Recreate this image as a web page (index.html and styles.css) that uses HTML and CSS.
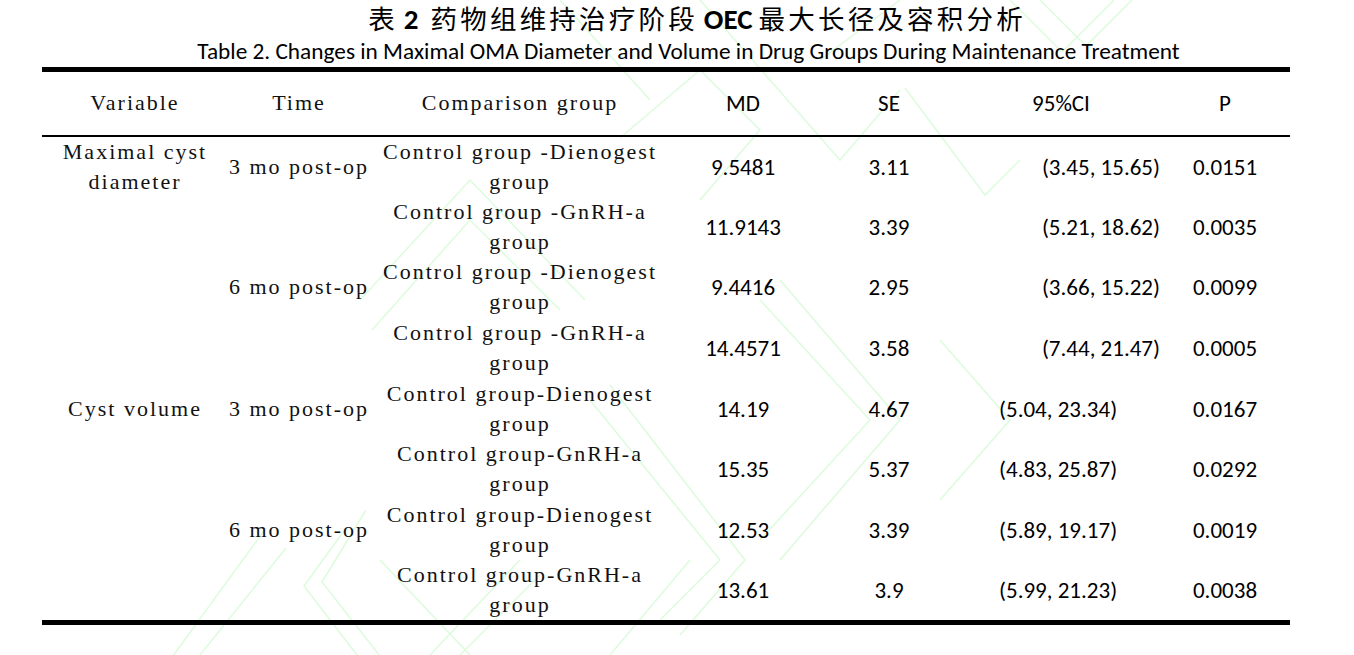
FILE: index.html
```html
<!DOCTYPE html>
<html lang="zh-CN">
<head>
<meta charset="utf-8">
<title>表 2 药物组维持治疗阶段 OEC 最大长径及容积分析</title>
<link rel="stylesheet" href="styles.css">
</head>
<body>
<svg class="watermark" width="1354" height="655" viewBox="0 0 1354 655" aria-hidden="true">
  <g fill="none" stroke="#ddfbdd" stroke-width="1.5">
    <path d="M1010 0 L1062 52 L1114 0"/>
    <path d="M1040 0 L1086 46 L1132 0"/>
    <path d="M905 88 L985 195 L1020 160"/>
    <path d="M620 138 L700 70 L760 130 L700 200"/>
    <path d="M372 330 L470 220 L560 310"/>
    <path d="M360 300 L470 180 L585 300"/>
    <path d="M266 528 L170 660"/>
    <path d="M286 548 L200 655"/>
    <path d="M346 528 L304 586 L407 720"/>
    <path d="M366 510 L322 582 L430 720"/>
    <path d="M380 560 L470 655"/>
    <path d="M520 560 L430 655"/>
    <path d="M540 575 L460 655"/>
    <path d="M690 560 L610 655"/>
    <path d="M590 400 L720 560 L660 620"/>
    <path d="M610 385 L745 560 L680 635"/>
    <path d="M760 300 L870 420 L760 540"/>
    <path d="M780 280 L900 420 L780 560"/>
    <path d="M940 340 L1010 420 L940 500"/>
    <path d="M700 0 L840 160 L900 90"/>
    <path d="M560 0 L650 100"/>
    <path d="M820 60 L900 0"/>
  </g>
</svg>

<main class="page">
  <h1 class="title"><span class="cjk">表</span> <b class="num">2</b>&nbsp; <span class="cjk">药物组维持治疗阶段</span> <b class="num">OEC</b> <span class="cjk">最大长径及容积分析</span></h1>
  <p class="subtitle">Table 2. Changes in Maximal OMA Diameter and Volume in Drug Groups During Maintenance Treatment</p>

  <table class="data">
    <colgroup>
      <col class="c-var">
      <col class="c-time">
      <col class="c-cmp">
      <col class="c-md">
      <col class="c-se">
      <col class="c-ci">
      <col class="c-p">
    </colgroup>
    <thead>
      <tr>
        <th class="serif">Variable</th>
        <th class="serif">Time</th>
        <th class="serif">Comparison group</th>
        <th class="sans">MD</th>
        <th class="sans">SE</th>
        <th class="sans">95%CI</th>
        <th class="sans">P</th>
      </tr>
    </thead>
    <tbody>
      <tr>
        <td class="serif">Maximal cyst<br>diameter</td>
        <td class="serif">3 mo post-op</td>
        <td class="serif">Control group -Dienogest<br>group</td>
        <td class="sans">9.5481</td>
        <td class="sans">3.11</td>
        <td class="sans ci-r">(3.45, 15.65)</td>
        <td class="sans">0.0151</td>
      </tr>
      <tr>
        <td class="serif"></td>
        <td class="serif"></td>
        <td class="serif">Control group -GnRH-a<br>group</td>
        <td class="sans">11.9143</td>
        <td class="sans">3.39</td>
        <td class="sans ci-r">(5.21, 18.62)</td>
        <td class="sans">0.0035</td>
      </tr>
      <tr>
        <td class="serif"></td>
        <td class="serif">6 mo post-op</td>
        <td class="serif">Control group -Dienogest<br>group</td>
        <td class="sans">9.4416</td>
        <td class="sans">2.95</td>
        <td class="sans ci-r">(3.66, 15.22)</td>
        <td class="sans">0.0099</td>
      </tr>
      <tr>
        <td class="serif"></td>
        <td class="serif"></td>
        <td class="serif">Control group -GnRH-a<br>group</td>
        <td class="sans">14.4571</td>
        <td class="sans">3.58</td>
        <td class="sans ci-r">(7.44, 21.47)</td>
        <td class="sans">0.0005</td>
      </tr>
      <tr>
        <td class="serif">Cyst volume</td>
        <td class="serif">3 mo post-op</td>
        <td class="serif">Control group-Dienogest<br>group</td>
        <td class="sans">14.19</td>
        <td class="sans">4.67</td>
        <td class="sans ci-l">(5.04, 23.34)</td>
        <td class="sans">0.0167</td>
      </tr>
      <tr>
        <td class="serif"></td>
        <td class="serif"></td>
        <td class="serif">Control group-GnRH-a<br>group</td>
        <td class="sans">15.35</td>
        <td class="sans">5.37</td>
        <td class="sans ci-l">(4.83, 25.87)</td>
        <td class="sans">0.0292</td>
      </tr>
      <tr>
        <td class="serif"></td>
        <td class="serif">6 mo post-op</td>
        <td class="serif">Control group-Dienogest<br>group</td>
        <td class="sans">12.53</td>
        <td class="sans">3.39</td>
        <td class="sans ci-l">(5.89, 19.17)</td>
        <td class="sans">0.0019</td>
      </tr>
      <tr>
        <td class="serif"></td>
        <td class="serif"></td>
        <td class="serif">Control group-GnRH-a<br>group</td>
        <td class="sans">13.61</td>
        <td class="sans">3.9</td>
        <td class="sans ci-l">(5.99, 21.23)</td>
        <td class="sans">0.0038</td>
      </tr>
    </tbody>
  </table>
</main>
</body>
</html>
```

FILE: styles.css
```css
html, body {
  margin: 0;
  padding: 0;
  background: #ffffff;
}

body {
  width: 1354px;
  height: 655px;
  overflow: hidden;
  position: relative;
  color: #000;
  font-family: "Carlito", "Lato", "Liberation Sans", sans-serif;
}

.watermark {
  position: absolute;
  left: 0;
  top: 0;
  z-index: 0;
}

.page {
  position: relative;
  z-index: 1;
  display: flex;
  flex-direction: column;
}

.title {
  margin: 0;
  box-sizing: border-box;
  height: 37px;
  padding-top: 3px;
  padding-left: 40px;
  line-height: 30px;
  text-align: center;
  font-size: 26.5px;
  font-weight: normal;
  white-space: nowrap;
}

.title .cjk {
  font-family: "Noto Sans CJK SC", "Noto Sans", sans-serif;
  font-weight: 400;
  letter-spacing: 3.2px;
}

.title .num {
  font-family: "Carlito", "Lato", "Liberation Sans", sans-serif;
  font-weight: 700;
  font-size: 29px;
}

.subtitle {
  margin: 0;
  height: 28px;
  line-height: 28px;
  padding-left: 23px;
  text-align: center;
  font-size: 23.3px;
  white-space: nowrap;
}

.data {
  margin-top: 2px;
  margin-left: 42px;
  width: 1248px;
  table-layout: fixed;
  border-collapse: collapse;
  border-top: 5px solid #000;
  border-bottom: 5px solid #000;
}

.c-var { width: 186px; }
.c-time { width: 142px; }
.c-cmp { width: 300px; }
.c-md { width: 146px; }
.c-se { width: 146px; }
.c-ci { width: 198px; }
.c-p { width: 130px; }

.data th,
.data td {
  padding: 0;
  text-align: center;
  vertical-align: middle;
  font-weight: normal;
  white-space: nowrap;
}

.data thead tr {
  height: 66px;
  border-bottom: 2px solid #000;
}

.data tbody tr {
  height: 60.6px;
}

.serif {
  font-family: "Liberation Serif", "Times New Roman", serif;
  font-size: 22px;
  letter-spacing: 2px;
  line-height: 30px;
  color: #111;
}

.sans {
  font-family: "Carlito", "Lato", "Liberation Sans", sans-serif;
  font-size: 23px;
  line-height: 30px;
}

.data td.ci-r {
  text-align: right;
  padding-right: 0;
}

.data td.ci-l {
  text-align: left;
  padding-left: 37px;
}
```
